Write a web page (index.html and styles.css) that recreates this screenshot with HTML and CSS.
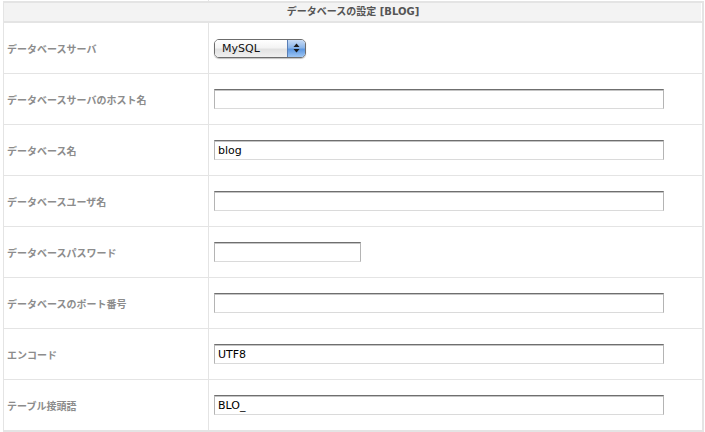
FILE: index.html
```html
<!DOCTYPE html>
<html lang="ja">
<head>
<meta charset="utf-8">
<title>データベースの設定</title>
<link rel="stylesheet" href="styles.css">
</head>
<body>
<div class="sheet">
  <div class="stub"><div class="stub-l"></div><div class="stub-r"></div></div>
  <div class="head">データベースの設定 [BLOG]</div>

  <div class="row">
    <div class="label">データベースサーバ</div>
    <div class="value">
      <div class="popup" role="listbox">
        <span class="popup-label">MySQL</span>
        <span class="popup-arrows">
          <svg width="7" height="10" viewBox="0 0 7 10"><path d="M3.5 0.5 L6.5 4 H0.5 Z" fill="#1b1b1b"/><path d="M3.5 9.5 L6.5 6 H0.5 Z" fill="#1b1b1b"/></svg>
        </span>
      </div>
    </div>
  </div>

  <div class="row">
    <div class="label">データベースサーバのホスト名</div>
    <div class="value"><input class="field" type="text" value=""></div>
  </div>

  <div class="row">
    <div class="label">データベース名</div>
    <div class="value"><input class="field" type="text" value="blog"></div>
  </div>

  <div class="row">
    <div class="label">データベースユーザ名</div>
    <div class="value"><input class="field" type="text" value=""></div>
  </div>

  <div class="row">
    <div class="label">データベースパスワード</div>
    <div class="value"><input class="field field-short" type="password" value=""></div>
  </div>

  <div class="row">
    <div class="label">データベースのポート番号</div>
    <div class="value"><input class="field" type="text" value=""></div>
  </div>

  <div class="row">
    <div class="label">エンコード</div>
    <div class="value"><input class="field" type="text" value="UTF8"></div>
  </div>

  <div class="row row-last">
    <div class="label">テーブル接頭語</div>
    <div class="value"><input class="field" type="text" value="BLO_"></div>
  </div>
</div>
</body>
</html>
```

FILE: styles.css
```css
html, body {
  margin: 0;
  padding: 0;
  background: #ffffff;
}

body {
  font-family: "DejaVu Sans", "Noto Sans CJK JP", sans-serif;
}

.sheet {
  margin-left: 3px;
  width: 701px;
}

.stub {
  display: grid;
  grid-template-columns: 206px 1fr;
  height: 1px;
}

.stub-l {
  border-right: 1px solid #e4e4e4;
}

.head {
  height: 18px;
  line-height: 18px;
  background: #f3f3f3;
  border-top: 2px solid #e4e4e4;
  border-bottom: 2px solid #e4e4e4;
  border-left: 1px solid #e4e4e4;
  border-right: 2px solid #e4e4e4;
  box-shadow: inset -1px 0 0 #ffffff;
  text-align: center;
  font-size: 10px;
  font-weight: bold;
  color: #555555;
}

.row {
  display: grid;
  grid-template-columns: 205px 1fr;
  height: 50px;
  border-left: 1px solid #e4e4e4;
  border-right: 2px solid #e4e4e4;
  border-bottom: 1px solid #e4e4e4;
}

.row-last {
  border-bottom-width: 2px;
}

.label {
  display: flex;
  align-items: center;
  padding-left: 3px;
  border-right: 1px solid #e4e4e4;
  font-size: 10px;
  font-weight: bold;
  color: #8c8c8c;
  white-space: nowrap;
}

.value {
  display: flex;
  align-items: center;
  padding-left: 5px;
}

.field {
  box-sizing: border-box;
  width: 450px;
  height: 20px;
  margin: 0;
  padding: 1px 3px 0;
  border-top: 1px solid #6f6f6f;
  border-left: 1px solid #b4b4b4;
  border-right: 1px solid #b4b4b4;
  border-bottom: 1px solid #dadada;
  box-shadow: inset 0 1px 0 #c4c4c4;
  border-radius: 0;
  background: #ffffff;
  font-family: "DejaVu Sans", sans-serif;
  font-size: 11px;
  color: #000000;
  outline: none;
}

.field-short {
  width: 147px;
}

.popup {
  box-sizing: border-box;
  display: flex;
  width: 92px;
  height: 19px;
  border: 1px solid #6c6c6c;
  border-radius: 5px;
  overflow: hidden;
  box-shadow: 0 1px 1px rgba(0, 0, 0, 0.25);
}

.popup-label {
  flex: 1;
  display: flex;
  align-items: center;
  padding-left: 7px;
  background: linear-gradient(#ffffff 0%, #f4f4f4 45%, #e2e2e2 55%, #f0f0f0 100%);
  font-size: 11px;
  font-weight: normal;
  color: #111111;
}

.popup-arrows {
  width: 17px;
  display: flex;
  align-items: center;
  justify-content: center;
  border-left: 1px solid #5a7fb6;
  background: linear-gradient(#c9dcf5 0%, #8cb6ea 45%, #5d97e0 55%, #9ec6f4 100%);
}
```
